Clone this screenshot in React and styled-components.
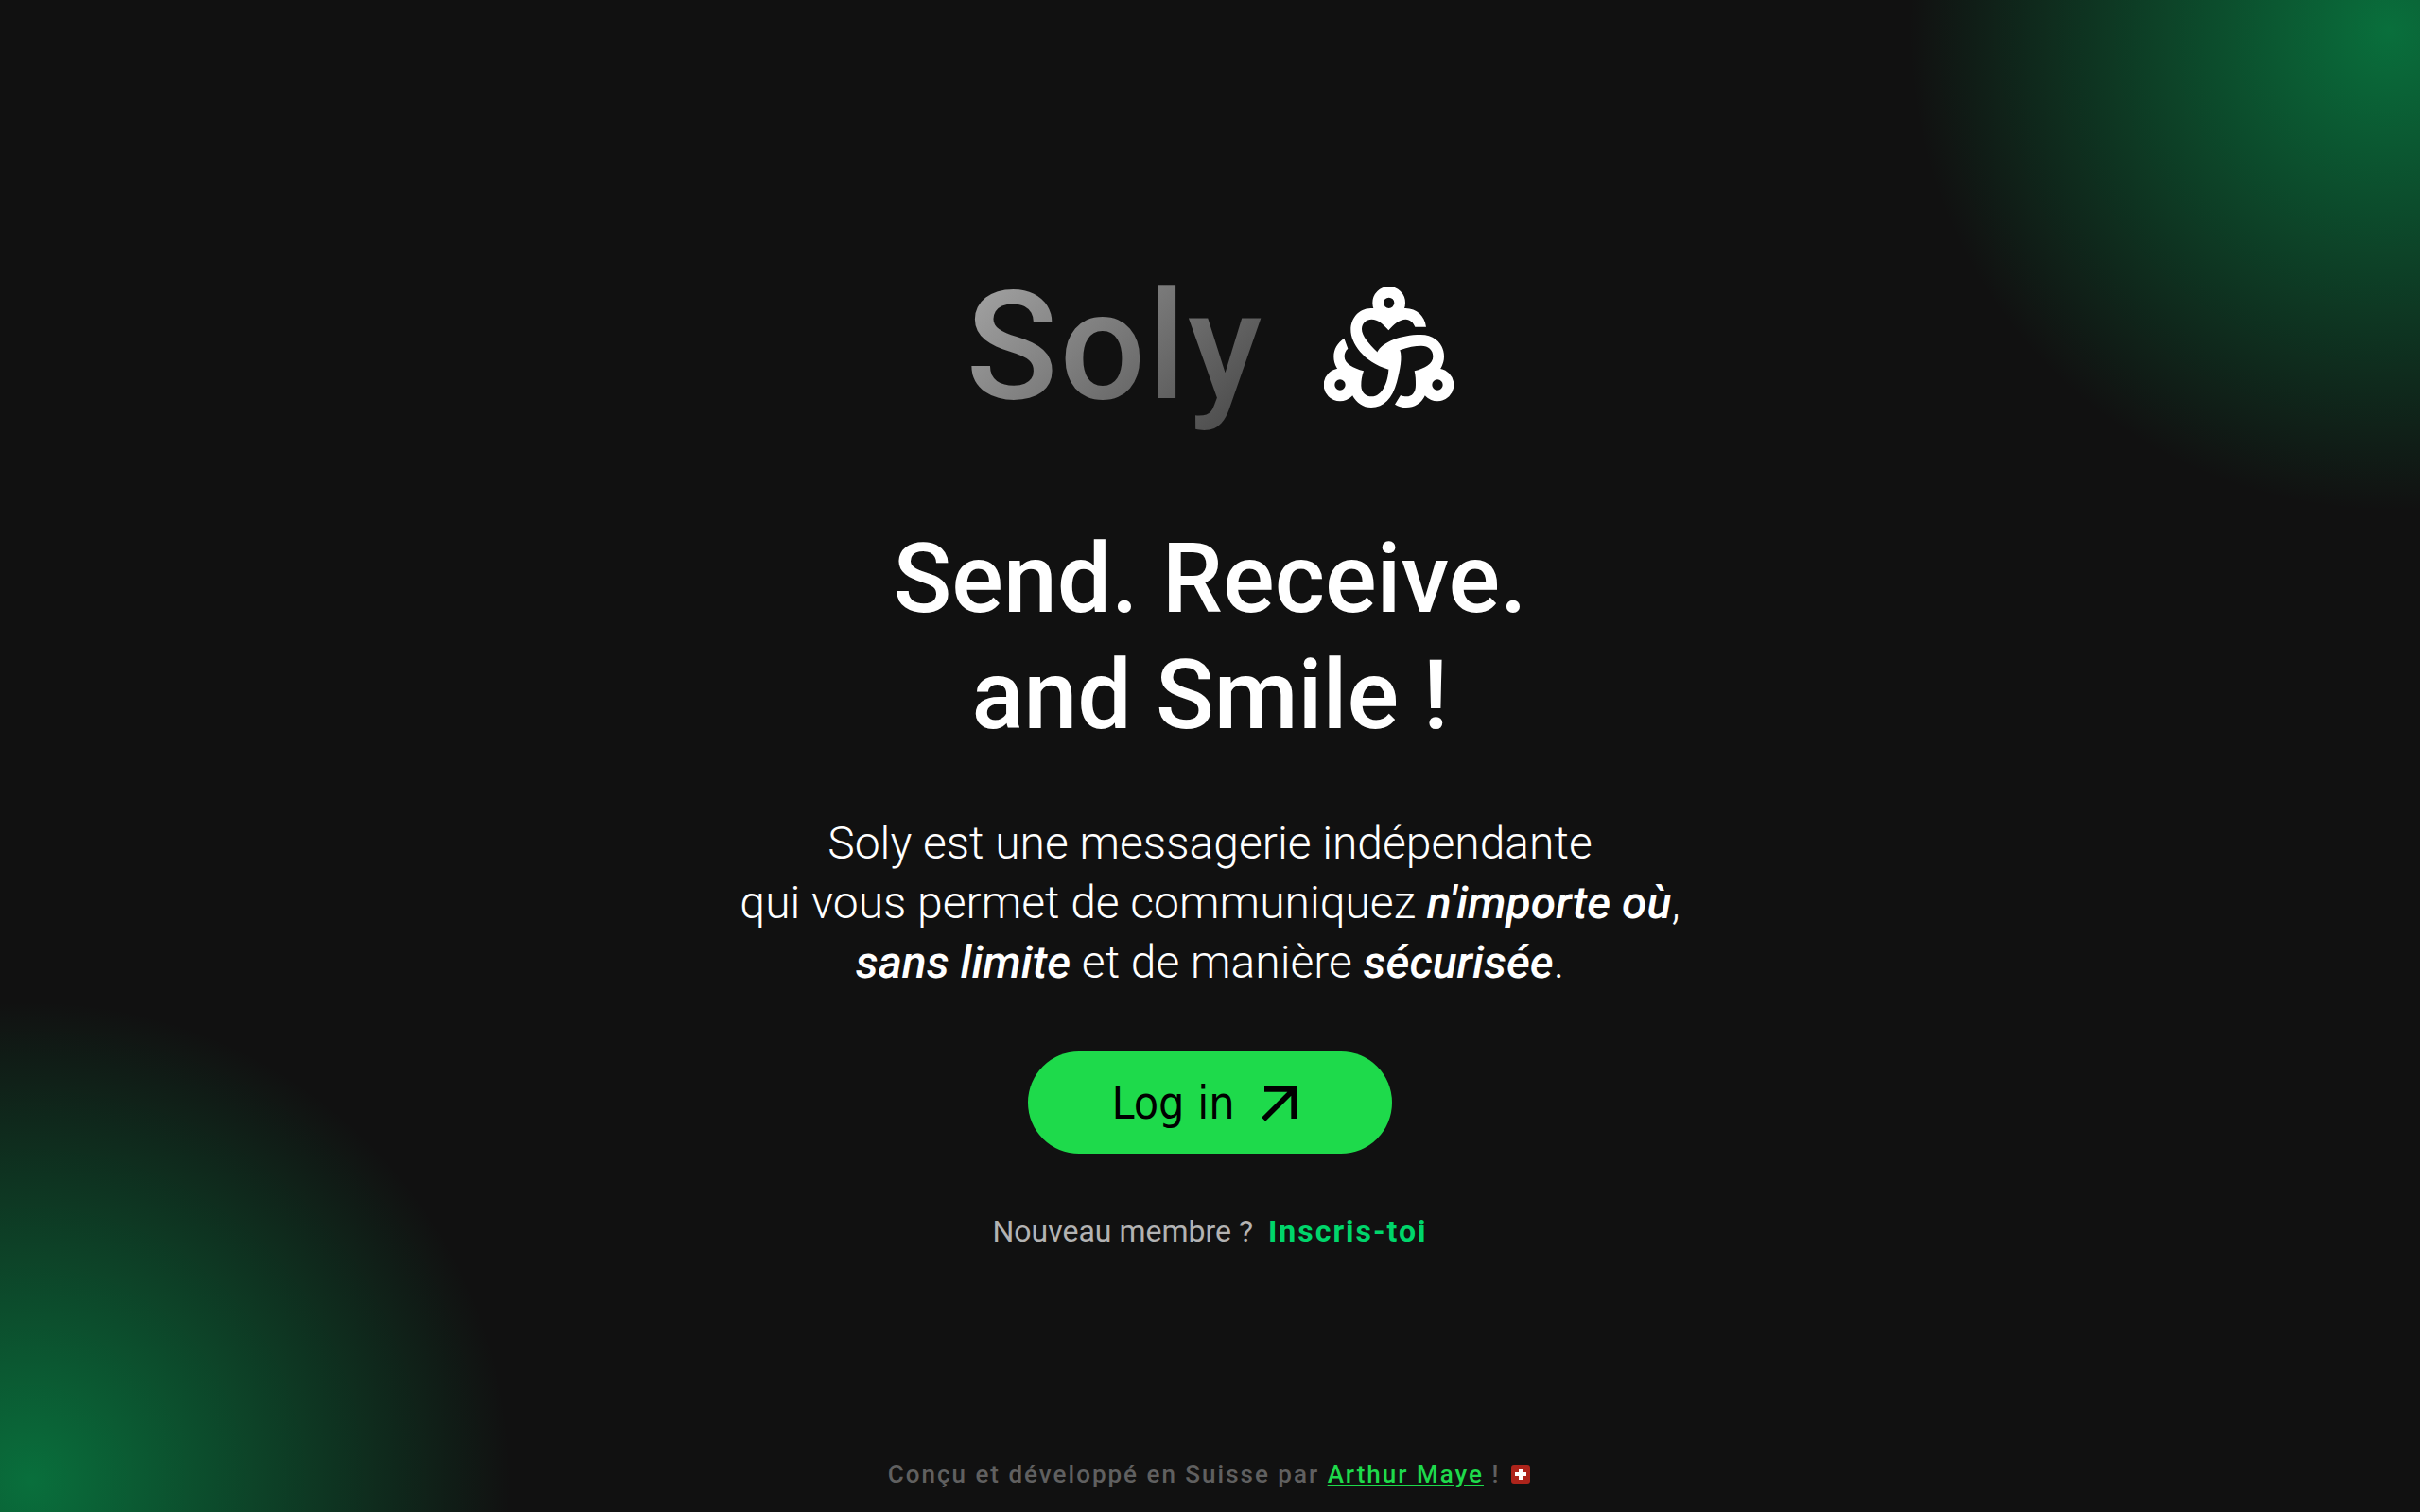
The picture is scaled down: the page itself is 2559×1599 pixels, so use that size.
import React from "react";
import styled, { createGlobalStyle } from "styled-components";
import { MdArrowOutward } from "react-icons/md";

const GlobalStyle = createGlobalStyle`
  * {
    box-sizing: border-box;
    margin: 0;
    padding: 0;
  }
  body {
    background: #111;
    color: #fff;
    font-family: Roboto, "Liberation Sans", sans-serif;
  }
`;

const Page = styled.div`
  min-height: 100vh;
  display: grid;
  grid-template-rows: 1fr auto 1fr;
  justify-items: center;
  text-align: center;
  background:
    radial-gradient(circle 508px at calc(100% - 32px) 32px, rgba(0, 214, 107, 0.48), rgba(0, 214, 107, 0)),
    radial-gradient(circle 508px at 32px calc(100% - 32px), rgba(0, 214, 107, 0.48), rgba(0, 214, 107, 0)),
    #111;
`;

const Main = styled.main`
  grid-row: 2;
  display: flex;
  flex-direction: column;
  align-items: center;
  gap: 63px;
  padding-bottom: 5px;
`;

const Brand = styled.div`
  display: flex;
  align-items: center;
  gap: 64px;
  margin-bottom: 27px;
`;

const Name = styled.h1`
  font-size: 160px;
  font-weight: 500;
  line-height: 188px;
  letter-spacing: 2px;
  color: transparent;
  background: linear-gradient(135deg, #aaa, #444);
  -webkit-background-clip: text;
  background-clip: text;
`;

const Logo = styled.svg`
  width: 137px;
  height: 128px;
`;

const Slogan = styled.h2`
  font-size: 102px;
  font-weight: 500;
  line-height: 123px;
`;

const Description = styled.p`
  font-size: 48px;
  font-weight: 300;
  line-height: 63px;

  em {
    font-weight: 500;
  }
`;

const LoginButton = styled.button`
  display: flex;
  align-items: center;
  justify-content: center;
  gap: 14px;
  height: 108px;
  padding: 0 84px 0 88px;
  border: none;
  border-radius: 54px;
  background: #1eda4b;
  color: #000;
  font-family: "DejaVu Sans Condensed", Roboto, sans-serif;
  font-size: 48px;
  cursor: pointer;
`;

const SignUp = styled.p`
  color: #b3b3b3;
  font-size: 32px;
  line-height: 38px;
`;

const SignUpLink = styled.a`
  margin-left: 8px;
  color: #00d66b;
  font-weight: 700;
  letter-spacing: 2px;
  text-decoration: none;
`;

const Footer = styled.footer`
  grid-row: 3;
  align-self: end;
  display: flex;
  align-items: center;
  gap: 12px;
  padding: 0 2px 24px 0;
  color: #606060;
  font-size: 26px;
  font-weight: 500;
  line-height: 32px;
  letter-spacing: 2px;
`;

const AuthorLink = styled.a`
  color: #1eda4b;
`;

const SolyLogo = () => (
  <Logo viewBox="63 66 411 384" fill="#fff" role="img" aria-label="Soly">
    <g fill="none" stroke="#fff" strokeWidth="35">
      <circle cx="269" cy="118" r="34.5" />
      <circle cx="114" cy="378" r="34.5" />
      <circle cx="423" cy="378" r="34.5" />
    </g>
    <path d="M212 135C172 136 148 168 148 203C148 245 188 305 268 329L304 268L232 274C205 247 183 222 183 201C183 181 198 170 214 170C235 170 252 186 268 205C285 185 303 170 322 170C337 170 347 181 352 194L387 194C383 160 357 135 322 135L307 135L269 150L231 135Z" />
    <path d="M232 274C248 243 305 219 370 219C418 219 444 252 444 288C444 302 440 313 434 325L405 360L384 411C372 437 350 450 324 450C311 450 299 447 288 440L306 411C312 414 318 415 325 415C342 415 354 403 354 378C354 364 354 350 350 334C384 325 409 312 409 288C409 267 394 254 372 254C352 254 330 258 304 268L268 300Z" />
    <path d="M127 230L139 263C131 270 128 279 128 288C128 312 157 325 189 334C183 350 181 364 181 381C182 404 197 415 214 415C248 415 266 370 268 329L260 290L304 268C312 290 305 330 294 370C280 422 253 450 213 450C187 450 167 436 153 411L132 360L104 325C97 312 94 302 94 288C94 264 106 245 127 230Z" />
  </Logo>
);

const SwissFlag = () => (
  <svg width="20" height="20" viewBox="0 0 20 20" role="img" aria-label="Suisse">
    <rect width="20" height="20" rx="3" fill="#ad241b" />
    <path d="M8 4h4v4h4v4h-4v4h-4v-4h-4v-4h4z" fill="#fff" />
  </svg>
);

const App = () => {
  return (
    <>
      <GlobalStyle />
      <Page>
        <Main>
          <Brand>
            <Name>Soly</Name>
            <SolyLogo />
          </Brand>
          <Slogan>
            Send. Receive.
            <br />
            and Smile !
          </Slogan>
          <Description>
            Soly est une messagerie indépendante
            <br />
            qui vous permet de communiquez <em>n'importe où</em>,
            <br />
            <em>sans limite</em> et de manière <em>sécurisée</em>.
          </Description>
          <LoginButton type="button">
            Log in
            <MdArrowOutward size={68} />
          </LoginButton>
          <SignUp>
            Nouveau membre ? <SignUpLink href="/signup">Inscris-toi</SignUpLink>
          </SignUp>
        </Main>
        <Footer>
          <p>
            Conçu et développé en Suisse par <AuthorLink href="/author">Arthur Maye</AuthorLink> !
          </p>
          <SwissFlag />
        </Footer>
      </Page>
    </>
  );
};

export default App;
